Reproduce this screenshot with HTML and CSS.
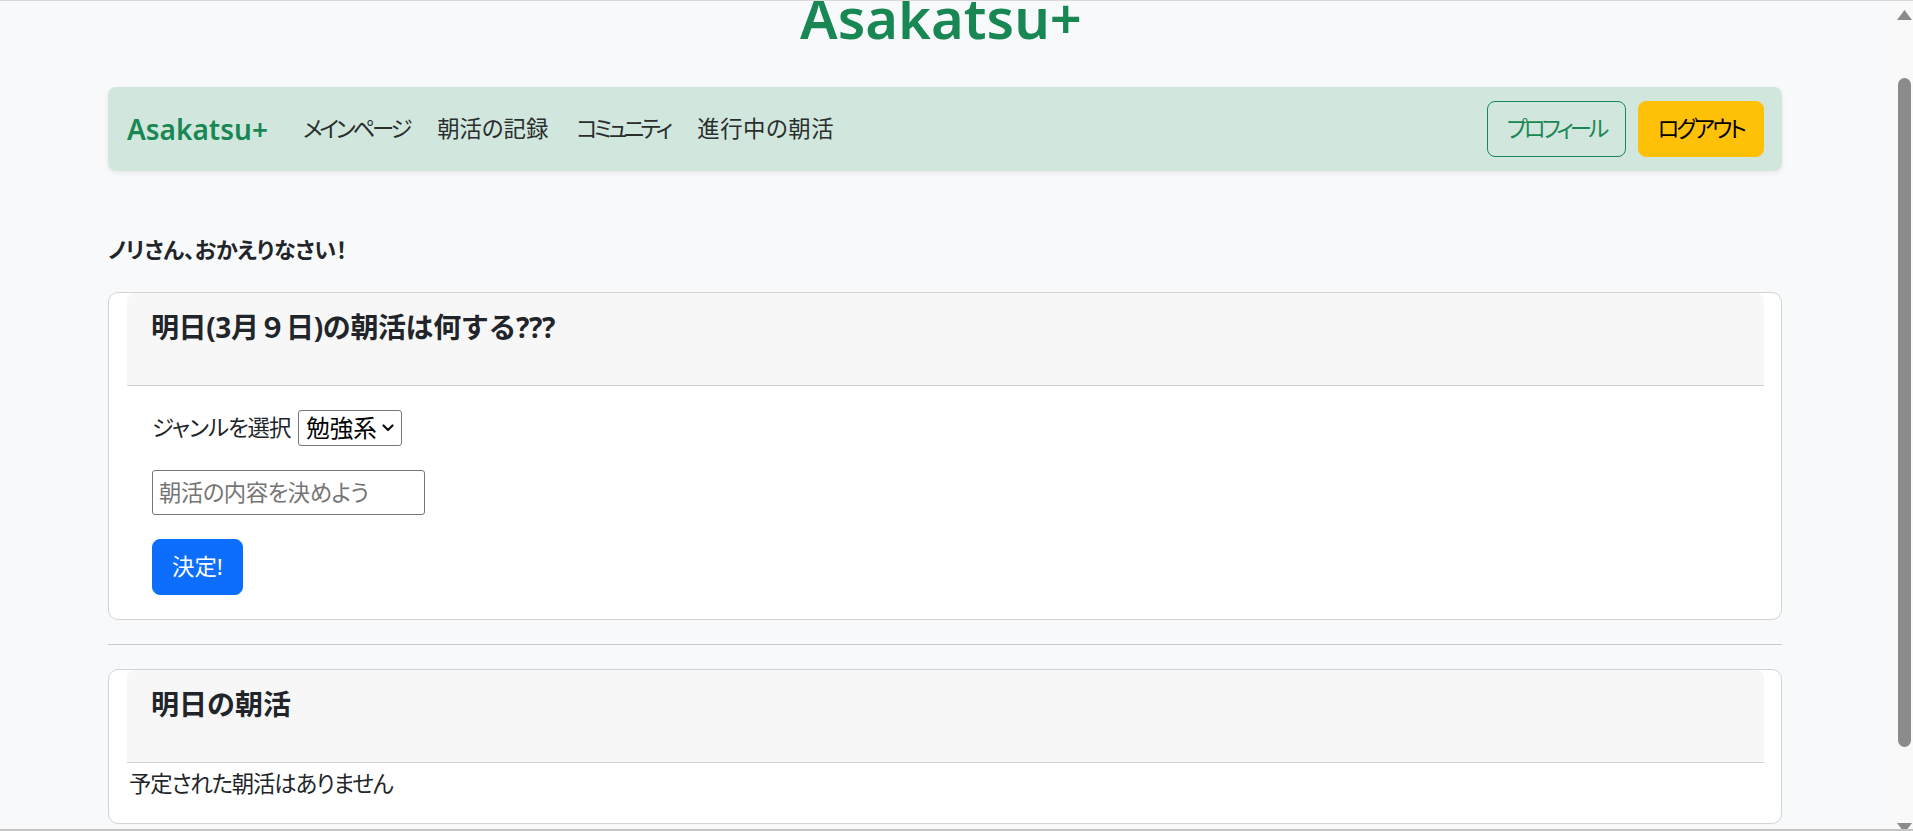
FILE: index.html
```html
<!DOCTYPE html>
<html lang="ja">
<head>
<meta charset="utf-8">
<title>Asakatsu+</title>
<link rel="stylesheet" href="styles.css">
</head>
<body>
<div class="viewport">
  <h1 class="site-title">Asakatsu+</h1>
  <main class="container">
    <nav class="navbar">
      <a class="brand" href="#">Asakatsu+</a>
      <ul class="nav-links">
        <li><a class="nav-link kana-tight" href="#">メインページ</a></li>
        <li><a class="nav-link" href="#">朝活の記録</a></li>
        <li><a class="nav-link kana-tighter" href="#">コミュニティ</a></li>
        <li><a class="nav-link kanji-loose" href="#">進行中の朝活</a></li>
      </ul>
      <div class="nav-actions">
        <button class="btn btn-outline btn-profile" type="button">プロフィール</button>
        <button class="btn btn-warning btn-logout" type="button">ログアウト</button>
      </div>
    </nav>

    <p class="welcome">ノリさん、おかえりなさい！</p>

    <section class="card">
      <div class="card-inner">
        <div class="card-header">
          <h5 class="card-title card-title-long">明日(3月９日)の朝活は何する???</h5>
        </div>
        <form class="card-body">
          <div class="field-row">
            <label class="field-label" for="genre">ジャンルを選択</label>
            <span class="select-wrap">
              <select id="genre" class="select">
                <option>勉強系</option>
              </select>
              <svg class="select-caret" width="12" height="8" viewBox="0 0 12 8" aria-hidden="true">
                <path d="M1.5 1.5 L6 6 L10.5 1.5" fill="none" stroke="#111" stroke-width="2.2" stroke-linecap="round" stroke-linejoin="round"/>
              </svg>
            </span>
          </div>
          <div class="field">
            <input class="text-input" type="text" placeholder="朝活の内容を決めよう">
          </div>
          <div class="field">
            <button class="btn btn-primary" type="button">決定!</button>
          </div>
        </form>
      </div>
    </section>

    <hr class="divider">

    <section class="card">
      <div class="card-inner">
        <div class="card-header">
          <h5 class="card-title">明日の朝活</h5>
        </div>
        <p class="empty">予定された朝活はありません</p>
      </div>
    </section>
  </main>
</div>

<div class="frame-top"></div>
<div class="scrollbar">
  <svg width="20" height="828" viewBox="0 0 20 828">
    <polygon points="4,19 19,19 11.5,9" fill="#8b8b8b"/>
    <rect x="5" y="77" width="13" height="669" rx="6.5" fill="#8b8b8b"/>
    <polygon points="4,822 19,822 11.5,832" fill="#8b8b8b"/>
  </svg>
</div>
<div class="frame-bottom"></div>
</body>
</html>
```
FILE: styles.css
```css
html, body {
  margin: 0;
  padding: 0;
}

body {
  background: #f8f9fa;
  font-family: "Noto Sans", "Noto Sans CJK JP", sans-serif;
  font-size: 22.4px;
  line-height: 1.5;
  color: #212529;
  overflow: hidden;
}

.viewport {
  width: 1893px;
}

.site-title {
  margin: -18px 0 0;
  padding-right: 11px;
  text-align: center;
  font-size: 56px;
  line-height: 70px;
  font-weight: 600;
  color: #198754;
}

.container {
  margin: 35px 0 0 108px;
  width: 1674px;
}

/* navbar */
.navbar {
  display: flex;
  align-items: center;
  box-sizing: border-box;
  height: 84px;
  padding: 0 18px 0 19px;
  background: #d1e7dd;
  border-radius: 8px;
  box-shadow: 0 2px 5px rgba(0, 0, 0, 0.07);
}

.brand {
  font-size: 28px;
  font-weight: 600;
  line-height: 1;
  color: #198754;
  text-decoration: none;
  margin-right: 21px;
}

.nav-links {
  display: flex;
  list-style: none;
  margin: 0;
  padding: 0;
}

.nav-link {
  display: block;
  padding: 0 14px;
  color: #2a2e2d;
  text-decoration: none;
  font-feature-settings: "palt";
}

.kana-tight {
  letter-spacing: -3.2px;
}

.kana-tighter {
  letter-spacing: -3.8px;
}

.kanji-loose {
  letter-spacing: 0.6px;
}

.nav-actions {
  margin-left: auto;
  display: flex;
  gap: 12px;
}

.btn {
  font-family: inherit;
  font-size: 22.4px;
  font-feature-settings: "palt";
  line-height: 34px;
  padding: 10px 19px;
  border: 1px solid transparent;
  border-radius: 8px;
  cursor: pointer;
}

.btn-outline {
  background: transparent;
  color: #198754;
  border-color: #198754;
}

.btn-warning {
  background: #ffc107;
  border-color: #ffc107;
  color: #000;
}

.btn-primary {
  background: #0d6efd;
  border-color: #0d6efd;
  color: #fff;
}

.btn-profile {
  letter-spacing: -3.7px;
}

.btn-logout {
  letter-spacing: -2.8px;
}

/* welcome */
.welcome {
  margin: 61px 0 26px;
  font-size: 22px;
  line-height: 34px;
  font-weight: 700;
  letter-spacing: -0.2px;
  font-feature-settings: "palt";
}

/* cards */
.card {
  background: #fff;
  border: 1px solid #d3d4d5;
  border-radius: 10px;
}

.card-inner {
  margin: 0 17px 0 18px;
}

.card-header {
  background: #f7f7f7;
  border-bottom: 1px solid #d2d2d2;
  border-radius: 8px 8px 0 0;
  padding: 17px 22px 24px 24px;
}

.card-title {
  margin: 0 0 17px;
  font-size: 28px;
  line-height: 34px;
  font-weight: 700;
}

.card-title-long {
  letter-spacing: -0.4px;
}

.card-body {
  padding: 24px 25px;
}

.field-row {
  display: flex;
  align-items: center;
  gap: 8px;
  height: 36px;
}

.field-label {
  letter-spacing: -1px;
  font-feature-settings: "palt";
}

.select-wrap {
  position: relative;
  display: inline-block;
  height: 36px;
}

.select {
  appearance: none;
  -webkit-appearance: none;
  box-sizing: border-box;
  display: block;
  width: 104px;
  height: 36px;
  font-family: inherit;
  font-size: 23.5px;
  color: #000;
  background: #fff;
  border: 1px solid #767676;
  border-radius: 3px;
  padding: 0 0 0 7px;
}

.select-caret {
  position: absolute;
  right: 8px;
  top: 14px;
  pointer-events: none;
}

.field {
  margin-top: 24px;
}

.text-input {
  box-sizing: border-box;
  width: 273px;
  height: 45px;
  padding: 0 6px;
  font-family: inherit;
  font-size: 22.4px;
  letter-spacing: -0.5px;
  border: 1px solid #767676;
  border-radius: 3px;
  background: #fff;
  font-feature-settings: "palt";
}

.text-input::placeholder {
  color: #757575;
}

.divider {
  border: 0;
  border-top: 1px solid #c8c9ca;
  margin: 24px 0;
}

.empty {
  margin: 0 0 22px;
  padding: 4px 0 0 2px;
  line-height: 34px;
  letter-spacing: -1.15px;
  font-feature-settings: "palt";
}

/* browser frame */
.frame-top {
  position: fixed;
  top: 0;
  left: 0;
  right: 0;
  height: 1px;
  background: #d9d9d9;
}

.frame-bottom {
  position: fixed;
  bottom: 0;
  left: 0;
  right: 0;
  height: 2px;
  background: #c4c4c4;
}

.scrollbar {
  position: fixed;
  top: 1px;
  right: 0;
  width: 20px;
  height: 828px;
  background: #f9f9f9;
}

.scrollbar svg {
  display: block;
}
```
